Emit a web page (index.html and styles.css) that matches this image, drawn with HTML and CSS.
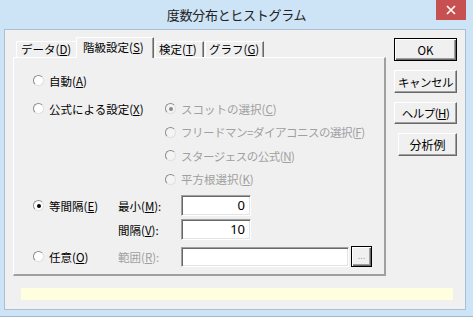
FILE: index.html
```html
<!DOCTYPE html>
<html lang="ja">
<head>
  <meta charset="UTF-8" />
  <title>度数分布とヒストグラム</title>
  <link rel="stylesheet" href="styles.css">
</head>
<body>
  <div class="window">
    <div class="titlebar">
      <span></span>
      <span class="title">度数分布とヒストグラム</span>
      <span class="close">
        <svg width="10" height="10" viewBox="0 0 10 10"><path d="M1 1 L9 9 M9 1 L1 9" stroke="#fff" stroke-width="1.6"/></svg>
      </span>
    </div>

    <div class="client">
      <div class="main">
        <div class="tabset">
          <div class="tabs">
            <div class="tab tab-data">データ(<u>D</u>)</div>
            <div class="tab active">階級設定(<u>S</u>)</div>
            <div class="tab tab-test">検定(<u>T</u>)</div>
            <div class="tab tab-graph">グラフ(<u>G</u>)</div>
          </div>

          <div class="panel">
            <div class="section sec-auto">
              <label class="opt"><span class="radio"></span>自動(<u>A</u>)</label>
            </div>

            <div class="section sec-formula">
              <label class="opt opt-main"><span class="radio"></span>公式による設定(<u>X</u>)</label>
              <div class="sub-list">
                <label class="opt disabled"><span class="radio checked"></span>スコットの選択(<u>C</u>)</label>
                <label class="opt disabled kana"><span class="radio"></span>フリードマン=ダイアコニスの選択(<u>F</u>)</label>
                <label class="opt disabled kana"><span class="radio"></span>スタージェスの公式(<u>N</u>)</label>
                <label class="opt disabled"><span class="radio"></span>平方根選択(<u>K</u>)</label>
              </div>
            </div>

            <div class="section sec-equal">
              <label class="opt opt-main"><span class="radio checked"></span>等間隔(<u>E</u>)</label>
              <div class="fields">
                <div class="field">
                  <span class="field-label">最小(<u>M</u>):</span>
                  <span class="textbox num">0</span>
                </div>
                <div class="field">
                  <span class="field-label">間隔(<u>V</u>):</span>
                  <span class="textbox num">10</span>
                </div>
              </div>
            </div>

            <div class="section sec-any">
              <label class="opt opt-main"><span class="radio"></span>任意(<u>O</u>)</label>
              <div class="field">
                <span class="field-label disabled">範囲(<u>R</u>):</span>
                <span class="textbox range"></span>
                <span class="browse">...</span>
              </div>
            </div>
          </div>
        </div>

        <div class="buttons">
          <button class="btn default">OK</button>
          <button class="btn kana">キャンセル</button>
          <button class="btn btn-help kana">ヘルプ(<u>H</u>)</button>
          <button class="btn btn-sample">分析例</button>
        </div>
      </div>

      <div class="status"></div>
    </div>
  </div>
</body>
</html>
```

FILE: styles.css
```css
* {
  box-sizing: border-box;
}

body {
  margin: 0;
  padding: 0;
  font-family: "Noto Sans CJK JP", "Noto Sans", sans-serif;
  font-size: 11.5px;
  color: #000;
  background: #cde3f6;
}

.window {
  width: 473px;
  height: 317px;
  background: #cde3f6;
  border-bottom: 1px solid #a3b8cc;
}

.titlebar {
  height: 29px;
  display: grid;
  grid-template-columns: 1fr auto 1fr;
  align-items: start;
}

.title {
  font-size: 13px;
  line-height: 30px;
  color: #222;
  letter-spacing: -0.3px;
}

.close {
  justify-self: end;
  margin-right: 7px;
  width: 30px;
  height: 20px;
  background: #c75050;
  display: flex;
  align-items: center;
  justify-content: center;
}

.client {
  margin-left: 4px;
  width: 462px;
  height: 281px;
  background: #f0f0f0;
  border: 1px solid #aabfd3;
}

.main {
  display: flex;
  gap: 8px;
  padding: 7px 0 0 8px;
}

.kana {
  letter-spacing: -0.5px;
}

/* tabs */
.tabs {
  display: flex;
  align-items: flex-end;
  height: 20px;
  padding-left: 3px;
}

.tab {
  height: 16px;
  line-height: 15px;
  padding-left: 4px;
  white-space: nowrap;
  background: #f0f0f0;
  border-top: 1px solid #fff;
  border-left: 1px solid #fff;
  border-right: 1px solid #696969;
  box-shadow: inset -1px 0 0 #a0a0a0;
}

.tab-data {
  width: 60px;
  border-right: none;
  box-shadow: none;
}

.tab.active {
  width: 78px;
  height: 21px;
  line-height: 18px;
  padding-left: 6px;
  margin-bottom: -1px;
  position: relative;
  z-index: 1;
}

.tab-test {
  width: 49px;
  margin-left: 1px;
  padding-left: 3px;
}

.tab-graph {
  width: 59px;
  margin-left: 1px;
  padding-left: 3px;
}

.panel {
  width: 373px;
  height: 219px;
  border-top: 1px solid #fff;
  border-left: 1px solid #fff;
  border-right: 2px solid #a0a0a0;
  border-bottom: 2px solid #a0a0a0;
  padding: 11px 0 0 19px;
  display: flex;
  flex-direction: column;
}

.section {
  display: flex;
}

.sec-formula {
  margin-top: 5px;
}

.sec-equal {
  margin-top: 3px;
}

.sec-any {
  margin-top: 4px;
}

.opt {
  display: flex;
  align-items: center;
  height: 23px;
  white-space: nowrap;
}

.opt-main {
  flex: none;
  width: 132px;
}

.sec-equal .opt-main,
.sec-any .opt-main {
  width: 85px;
}

.sub-list .opt {
  height: 23.5px;
}

.radio {
  flex: none;
  width: 11px;
  height: 11px;
  margin-right: 5px;
  border-radius: 50%;
  background: #fff;
  border: 1px solid;
  border-color: #8d8d8d #e0e0e0 #e0e0e0 #8d8d8d;
  display: flex;
  align-items: center;
  justify-content: center;
}

.radio.checked::after {
  content: "";
  width: 4px;
  height: 4px;
  border-radius: 50%;
  background: #000;
}

.disabled {
  color: #a0a0a0;
}

.disabled .radio {
  background: #f4f4f4;
}

.disabled .radio.checked::after {
  background: #8a8a8a;
}

/* fields */
.fields {
  display: flex;
  flex-direction: column;
  gap: 1px;
}

.field {
  display: flex;
  align-items: center;
  height: 23px;
}

.field-label {
  width: 63px;
}

.textbox {
  height: 21px;
  background: #fff;
  border-top: 1px solid #a0a0a0;
  border-left: 1px solid #a0a0a0;
  border-right: 1px solid #fff;
  border-bottom: 1px solid #fff;
  box-shadow: inset 1px 1px 0 #696969, inset -1px -1px 0 #e3e3e3;
}

.num {
  width: 70px;
  text-align: right;
  padding-right: 5px;
  font-family: "Noto Sans", sans-serif;
  font-size: 13px;
  line-height: 19px;
}

.range {
  width: 168px;
  height: 20px;
  margin-top: 1px;
}

.browse {
  width: 21px;
  height: 21px;
  margin-left: 2px;
  border: 1px solid #000;
  background: #f0f0f0;
  box-shadow: inset 1px 1px 0 #fff, inset -1px -1px 0 #696969, inset -2px -2px 0 #a0a0a0;
  color: #9a9a9a;
  font-family: "DejaVu Sans", sans-serif;
  font-size: 8px;
  line-height: 20px;
  text-align: center;
}

/* buttons */
.buttons {
  display: flex;
  flex-direction: column;
  gap: 9px;
  margin-top: 1px;
}

.btn {
  width: 63px;
  height: 23px;
  padding: 0;
  font-family: "Noto Sans CJK JP", "Noto Sans", sans-serif;
  font-size: 11.5px;
  color: #000;
  background: #f0f0f0;
  border: 1px solid;
  border-color: #fff #696969 #696969 #fff;
  box-shadow: inset -1px -1px 0 #a0a0a0;
}

.btn.default {
  border-color: #000;
  box-shadow: inset 1px 1px 0 #fff, inset -1px -1px 0 #696969, inset -2px -2px 0 #a0a0a0;
}

.btn-help {
  height: 22px;
}

.btn-sample {
  width: 59px;
  margin-left: 4px;
  font-size: 12px;
}

.status {
  margin: 12px 0 0 16px;
  width: 432px;
  height: 12px;
  background: #ffffe0;
}
```
